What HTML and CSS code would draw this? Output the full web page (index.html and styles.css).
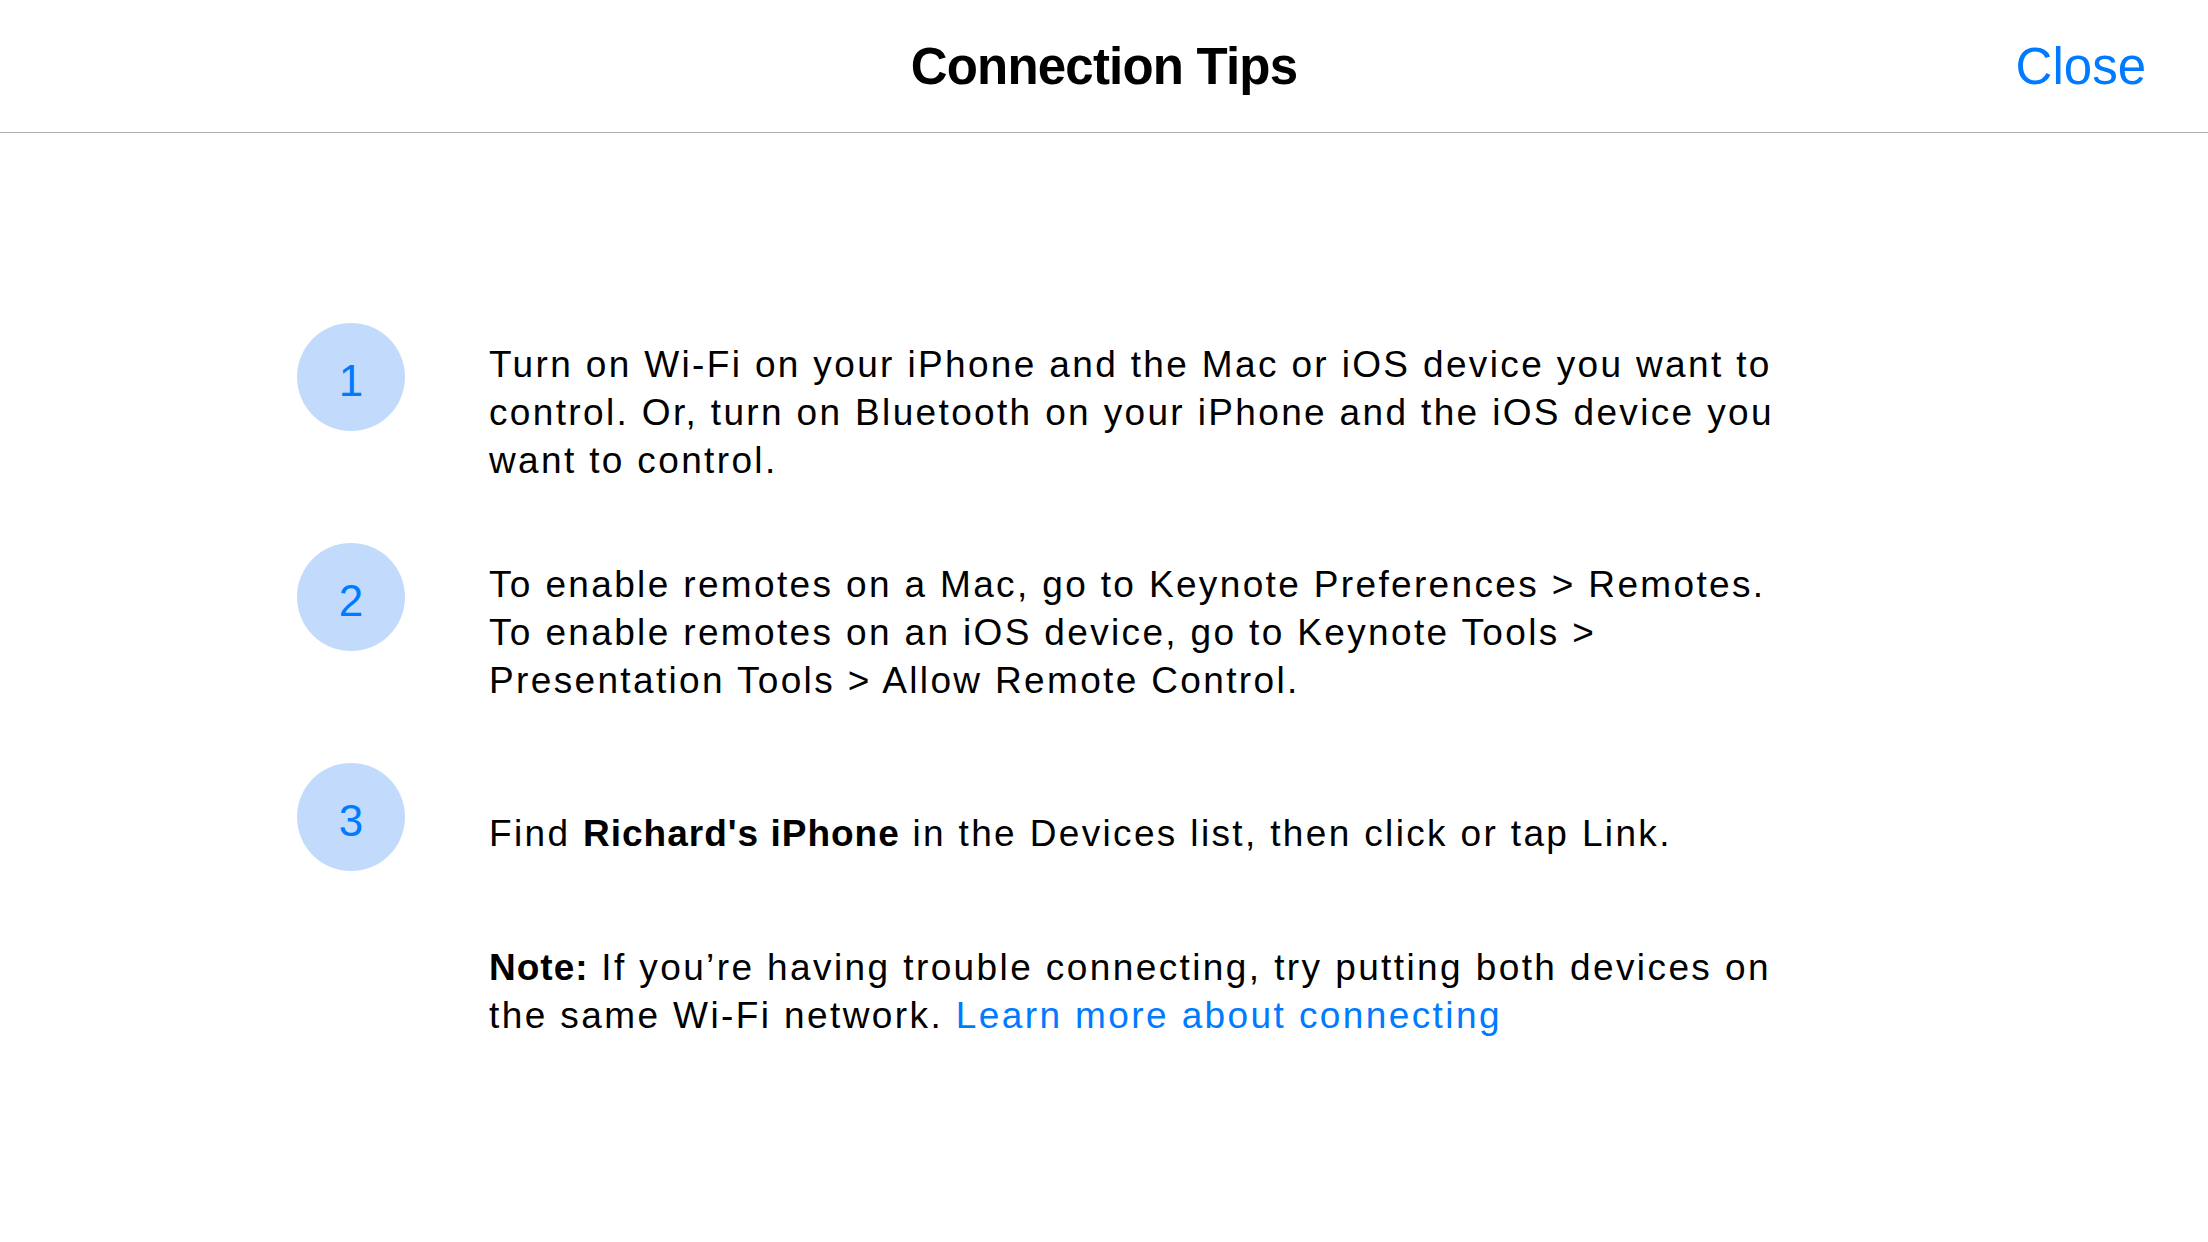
FILE: index.html
```html
<!DOCTYPE html>
<html lang="en">
<head>
<meta charset="utf-8">
<title>Connection Tips</title>
<link rel="stylesheet" href="styles.css">
</head>
<body>
<header class="navbar">
  <div class="nav-side"></div>
  <h1 class="nav-title">Connection Tips</h1>
  <div class="nav-side nav-right"><a class="nav-close" href="#">Close</a></div>
</header>
<main class="tips">
  <ol class="steps">
    <li class="step">
      <span class="step-num">1</span>
      <p class="step-text">Turn on Wi-Fi on your iPhone and the Mac or iOS device you want to control. Or, turn on Bluetooth on your iPhone and the iOS device you want to control.</p>
    </li>
    <li class="step">
      <span class="step-num">2</span>
      <p class="step-text">To enable remotes on a Mac, go to Keynote Preferences &gt; Remotes. To enable remotes on an iOS device, go to Keynote Tools &gt; Presentation Tools &gt; Allow Remote Control.</p>
    </li>
    <li class="step">
      <span class="step-num">3</span>
      <p class="step-text step-text-single">Find <strong>Richard's iPhone</strong> in the Devices list, then click or tap Link.</p>
    </li>
  </ol>
  <p class="note"><strong>Note:</strong> If you’re having trouble connecting, try putting both devices on the same Wi-Fi network. <a class="link" href="#">Learn more about connecting</a></p>
</main>
</body>
</html>
```
FILE: styles.css
```css
html, body {
  margin: 0;
  padding: 0;
  background: #ffffff;
}
body {
  font-family: "Liberation Sans", Arial, Helvetica, sans-serif;
  color: #000000;
  width: 2208px;
  height: 1242px;
  overflow: hidden;
}
.navbar {
  box-sizing: border-box;
  height: 133px;
  border-bottom: 1px solid #b2b2b2;
  display: flex;
  align-items: flex-start;
  padding: 41px 62px 0 62px;
}
.nav-side {
  flex: 1;
}
.nav-right {
  display: flex;
  justify-content: flex-end;
}
.nav-title {
  margin: 0;
  font-size: 51px;
  line-height: 51px;
  font-weight: 700;
  letter-spacing: -0.8px;
}
.nav-close {
  font-size: 51px;
  line-height: 51px;
  color: #007aff;
  text-decoration: none;
}
.tips {
  padding: 190px 0 0 297px;
}
.steps {
  list-style: none;
  margin: 0;
  padding: 0;
  display: flex;
  flex-direction: column;
  gap: 58px;
}
.step {
  display: grid;
  grid-template-columns: 108px 1296px;
  column-gap: 84px;
  align-items: start;
}
.step-num {
  width: 108px;
  height: 108px;
  border-radius: 50%;
  background: #c2dbfc;
  color: #007aff;
  font-size: 44px;
  line-height: 108px;
  text-align: center;
  box-sizing: border-box;
  padding-top: 4px;
}
.step-text {
  margin: 18px 0 0 0;
  font-size: 37px;
  line-height: 48px;
  letter-spacing: 2.35px;
}
.step-text-single {
  margin-top: 47px;
}
.step-text strong,
.note strong {
  font-weight: 700;
  letter-spacing: 1px;
}
.note {
  margin: 73px 0 0 192px;
  width: 1296px;
  font-size: 37px;
  line-height: 48px;
  letter-spacing: 2.4px;
}
.link {
  color: #007aff;
  text-decoration: none;
}
```
